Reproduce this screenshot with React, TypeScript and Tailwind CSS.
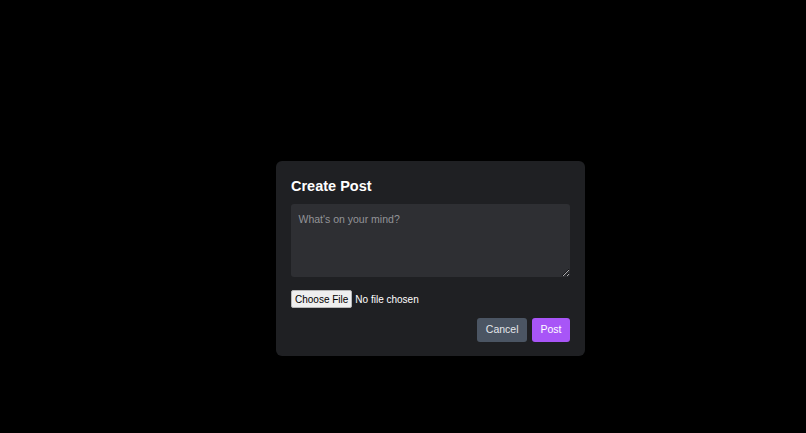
import React, { useState } from 'react';

const App: React.FC = () => {
  const [text, setText] = useState('');

  return (
    <div className="min-h-screen bg-black pt-[161px] pl-[276px] font-['Liberation_Sans',Arial,sans-serif]">
      {/* Modal */}
      <div className="w-[309px] rounded-[6px] bg-[#1f2023] px-[15px] pt-[15px] pb-[14px]">
        <h2 className="mb-[7px] text-[14.5px] leading-[21px] font-bold text-white">Create Post</h2>

        <textarea
          value={text}
          onChange={(e) => setText(e.target.value)}
          placeholder="What's on your mind?"
          className="block h-[72.5px] w-full rounded-[3px] bg-[#2e2f33] px-[7.5px] py-[7.5px] text-[10.5px] leading-[15px] text-white placeholder:text-[#939498] outline-none"
        />

        <input
          type="file"
          className="mt-[13.5px] block h-[18px] text-[10px] leading-[18px] text-white file:mr-[3px] file:h-[18px] file:rounded-[2px] file:border file:border-[#b8b8b8] file:bg-[#efefef] file:px-[3px] file:text-[10px] file:text-black"
        />

        <div className="mt-[10px] flex justify-end gap-[5px]">
          <button className="h-[24px] rounded-[3px] bg-[#4b5563] px-[8.5px] text-[10.5px] text-[#e5e7eb]">
            Cancel
          </button>
          <button className="h-[24px] rounded-[3px] bg-[#a855f7] px-[8.5px] text-[10.5px] text-white">
            Post
          </button>
        </div>
      </div>
    </div>
  );
};

export default App;
